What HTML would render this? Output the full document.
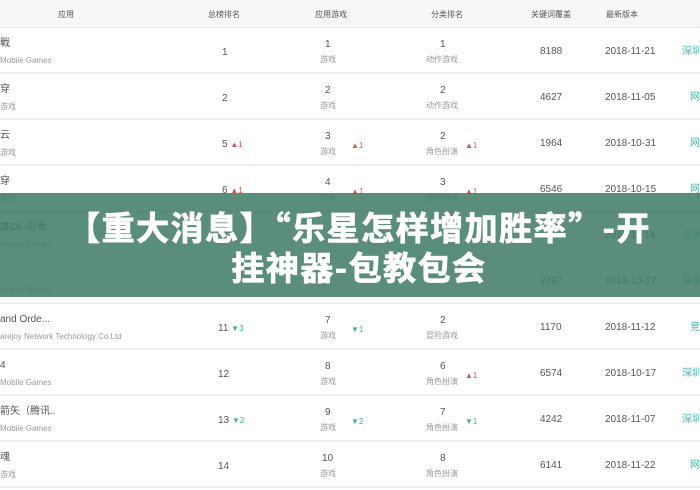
<!DOCTYPE html>
<html><head><meta charset="utf-8"><style>
*{margin:0;padding:0;box-sizing:border-box}
body{width:700px;height:490px;overflow:hidden;background:#fff;font-family:"Liberation Sans","Noto Sans CJK SC",sans-serif;position:relative;color:#666}
.hdr{position:absolute;left:0;top:0;width:700px;height:28px;background:#f7f7f7;border-bottom:1px solid #e6e6e6}
.row{position:absolute;left:0;width:700px;height:46px;border-bottom:2px solid #efefef;background:#fff}
.c{position:absolute;font-size:10px;white-space:nowrap;line-height:12px}
.h{font-size:8px;color:#555;top:9px}
.n{font-size:10px;color:#555}
.s{font-size:8px;color:#999}
.up{color:#d9534f;font-size:8px}
.dn{color:#3bb0a0;font-size:8px}
.tl{color:#48b5a8}
.ov{position:absolute;left:0;top:193px;width:700px;height:104px;background:rgba(68,125,105,0.88);color:#fff;font-weight:bold;font-size:33px;letter-spacing:1.5px;line-height:40px;text-align:center;padding-top:13px;padding-left:18px;font-family:"Noto Sans CJK SC",sans-serif;-webkit-text-stroke:0.8px #fff}
</style></head><body>
<div class="hdr">
<span class="c h" style="left:58px">应用</span>
<span class="c h" style="left:208px">总榜排名</span>
<span class="c h" style="left:315px">应用游戏</span>
<span class="c h" style="left:431px">分类排名</span>
<span class="c h" style="left:531px">关键词覆盖</span>
<span class="c h" style="left:606px">最新版本</span>
</div>

<div class="row" style="top:28px">
<span class="c n" style="left:0;top:10px">戰</span><span class="c s" style="left:0;top:27px">Mobile Games</span>
<span class="c n" style="left:222px;top:19px">1</span>
<span class="c n" style="left:325px;top:11px">1</span><span class="c s" style="left:320px;top:26px">游戏</span>
<span class="c n" style="left:440px;top:11px">1</span><span class="c s" style="left:426px;top:26px">动作游戏</span>
<span class="c n" style="left:540px;top:18px">8188</span><span class="c n" style="left:605px;top:18px">2018-11-21</span><span class="c tl" style="left:682px;top:18px">深圳</span>
</div>
<div class="row" style="top:74px">
<span class="c n" style="left:0;top:10px">穿</span><span class="c s" style="left:0;top:27px">游戏</span>
<span class="c n" style="left:222px;top:19px">2</span>
<span class="c n" style="left:325px;top:11px">2</span><span class="c s" style="left:320px;top:26px">游戏</span>
<span class="c n" style="left:440px;top:11px">2</span><span class="c s" style="left:426px;top:26px">动作游戏</span>
<span class="c n" style="left:540px;top:18px">4627</span><span class="c n" style="left:605px;top:18px">2018-11-05</span><span class="c tl" style="left:690px;top:18px">网</span>
</div>
<div class="row" style="top:120px">
<span class="c n" style="left:0;top:10px">云</span><span class="c s" style="left:0;top:27px">游戏</span>
<span class="c n" style="left:222px;top:19px">5 <span class="up">▲1</span></span>
<span class="c n" style="left:325px;top:11px">3</span><span class="c s" style="left:320px;top:26px">游戏</span><span class="c up" style="left:351px;top:20px">▲1</span>
<span class="c n" style="left:440px;top:11px">2</span><span class="c s" style="left:426px;top:26px">角色扮演</span><span class="c up" style="left:465px;top:20px">▲1</span>
<span class="c n" style="left:540px;top:18px">1964</span><span class="c n" style="left:605px;top:18px">2018-10-31</span><span class="c tl" style="left:690px;top:18px">网</span>
</div>
<div class="row" style="top:166px">
<span class="c n" style="left:0;top:10px">穿</span><span class="c s" style="left:0;top:27px">游戏</span>
<span class="c n" style="left:222px;top:19px">6 <span class="up">▲1</span></span>
<span class="c n" style="left:325px;top:11px">4</span><span class="c s" style="left:320px;top:26px">游戏</span><span class="c up" style="left:351px;top:20px">▲1</span>
<span class="c n" style="left:440px;top:11px">3</span><span class="c s" style="left:426px;top:26px">角色扮演</span><span class="c up" style="left:465px;top:20px">▲1</span>
<span class="c n" style="left:540px;top:18px">6546</span><span class="c n" style="left:605px;top:18px">2018-10-15</span><span class="c tl" style="left:690px;top:18px">网</span>
</div>
<div class="row" style="top:212px">
<span class="c n" style="left:0;top:10px">雄OL-忍者...</span><span class="c s" style="left:0;top:27px">Mobile Games</span>
<span class="c n" style="left:605px;top:18px">2018-11-14</span><span class="c tl" style="left:682px;top:18px">深圳</span>
</div>
<div class="row" style="top:258px">
<span class="c s" style="left:0;top:27px">Mobile Games</span>
<span class="c n" style="left:540px;top:18px">2767</span><span class="c n" style="left:605px;top:18px">2018-10-17</span><span class="c tl" style="left:682px;top:18px">深圳</span>
</div>
<div class="row" style="top:304px">
<span class="c n" style="left:0;top:10px">and Orde...</span><span class="c s" style="left:0;top:27px">arejoy Network Technology Co.Ltd</span>
<span class="c n" style="left:218px;top:19px">11 <span class="dn">▼3</span></span>
<span class="c n" style="left:325px;top:11px">7</span><span class="c s" style="left:320px;top:26px">游戏</span><span class="c dn" style="left:351px;top:20px">▼1</span>
<span class="c n" style="left:440px;top:11px">2</span><span class="c s" style="left:426px;top:26px">冒险游戏</span>
<span class="c n" style="left:540px;top:18px">1170</span><span class="c n" style="left:605px;top:18px">2018-11-12</span><span class="c tl" style="left:690px;top:18px">竞</span>
</div>
<div class="row" style="top:350px">
<span class="c n" style="left:0;top:10px">4</span><span class="c s" style="left:0;top:27px">Mobile Games</span>
<span class="c n" style="left:218px;top:19px">12</span>
<span class="c n" style="left:325px;top:11px">8</span><span class="c s" style="left:320px;top:26px">游戏</span>
<span class="c n" style="left:440px;top:11px">6</span><span class="c s" style="left:426px;top:26px">角色扮演</span><span class="c up" style="left:465px;top:20px">▲1</span>
<span class="c n" style="left:540px;top:18px">6574</span><span class="c n" style="left:605px;top:18px">2018-10-17</span><span class="c tl" style="left:682px;top:18px">深圳</span>
</div>
<div class="row" style="top:396px">
<span class="c n" style="left:0;top:10px">箭矢（腾讯..</span><span class="c s" style="left:0;top:27px">Mobile Games</span>
<span class="c n" style="left:218px;top:19px">13 <span class="dn">▼2</span></span>
<span class="c n" style="left:325px;top:11px">9</span><span class="c s" style="left:320px;top:26px">游戏</span><span class="c dn" style="left:351px;top:20px">▼2</span>
<span class="c n" style="left:440px;top:11px">7</span><span class="c s" style="left:426px;top:26px">角色扮演</span><span class="c dn" style="left:465px;top:20px">▼1</span>
<span class="c n" style="left:540px;top:18px">4242</span><span class="c n" style="left:605px;top:18px">2018-11-07</span><span class="c tl" style="left:682px;top:18px">深圳</span>
</div>
<div class="row" style="top:442px">
<span class="c n" style="left:0;top:10px">魂</span><span class="c s" style="left:0;top:27px">游戏</span>
<span class="c n" style="left:218px;top:19px">14</span>
<span class="c n" style="left:322px;top:11px">10</span><span class="c s" style="left:320px;top:26px">游戏</span>
<span class="c n" style="left:440px;top:11px">8</span><span class="c s" style="left:426px;top:26px">角色扮演</span>
<span class="c n" style="left:540px;top:18px">6141</span><span class="c n" style="left:605px;top:18px">2018-11-22</span><span class="c tl" style="left:690px;top:18px">网</span>
</div>

<div class="ov">【重大消息】“乐星怎样增加胜率”-开<br>挂神器-包教包会</div>
</body></html>
